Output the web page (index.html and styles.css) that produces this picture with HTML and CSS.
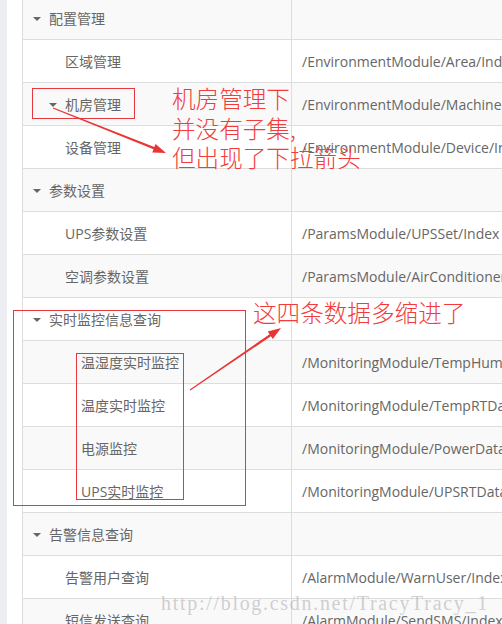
FILE: index.html
```html
<!DOCTYPE html>
<html lang="zh-CN">
<head>
<meta charset="utf-8">
<title>菜单管理</title>
<link rel="stylesheet" href="styles.css">
</head>
<body>
<div class="page">
  <div class="strip"></div>
  <div class="content">
    <div class="tree-table">
      <div class="row odd"><div class="name lvl1"><span class="twisty open"></span>配置管理</div><div class="url"></div></div>
      <div class="row"><div class="name lvl2"><span class="twisty"></span>区域管理</div><div class="url">/EnvironmentModule/Area/Index</div></div>
      <div class="row odd"><div class="name lvl2-open"><span class="twisty open"></span>机房管理</div><div class="url">/EnvironmentModule/MachineRoom/Index</div></div>
      <div class="row"><div class="name lvl2"><span class="twisty"></span>设备管理</div><div class="url">/EnvironmentModule/Device/Index</div></div>
      <div class="row odd"><div class="name lvl1"><span class="twisty open"></span>参数设置</div><div class="url"></div></div>
      <div class="row"><div class="name lvl2"><span class="twisty"></span>UPS参数设置</div><div class="url">/ParamsModule/UPSSet/Index</div></div>
      <div class="row odd"><div class="name lvl2"><span class="twisty"></span>空调参数设置</div><div class="url">/ParamsModule/AirConditionerSet/Index</div></div>
      <div class="row"><div class="name lvl1"><span class="twisty open"></span>实时监控信息查询</div><div class="url"></div></div>
      <div class="row odd"><div class="name lvl3"><span class="twisty"></span>温湿度实时监控</div><div class="url">/MonitoringModule/TempHumRTData/Index</div></div>
      <div class="row"><div class="name lvl3"><span class="twisty"></span>温度实时监控</div><div class="url">/MonitoringModule/TempRTData/Index</div></div>
      <div class="row odd"><div class="name lvl3"><span class="twisty"></span>电源监控</div><div class="url">/MonitoringModule/PowerData/Index</div></div>
      <div class="row"><div class="name lvl3"><span class="twisty"></span>UPS实时监控</div><div class="url">/MonitoringModule/UPSRTData/Index</div></div>
      <div class="row odd"><div class="name lvl1"><span class="twisty open"></span>告警信息查询</div><div class="url"></div></div>
      <div class="row"><div class="name lvl2"><span class="twisty"></span>告警用户查询</div><div class="url">/AlarmModule/WarnUser/Index</div></div>
      <div class="row odd"><div class="name lvl2"><span class="twisty"></span>短信发送查询</div><div class="url">/AlarmModule/SendSMS/Index</div></div>
    </div>
  </div>

  <svg class="marks" width="502" height="624" viewBox="0 0 502 624" aria-hidden="true">
    <rect x="32.5" y="88.5" width="102" height="30" fill="none" stroke="#e8383d" stroke-width="1"/>
    <rect x="13.5" y="310.5" width="232" height="195" fill="none" stroke="#e8383d" stroke-width="1"/>
    <rect x="76.5" y="353.5" width="107" height="146" fill="none" stroke="#e8383d" stroke-width="1"/>
    <polygon fill="#ea3535" points="52.8,108.5 153.5,149.3 152.3,152.4 166,153 155.6,144.0 154.3,147.1 53.2,107.5"/>
    <polygon fill="#ea3535" points="190.3,390.4 270.9,336.3 272.8,339.0 281,328 267.7,331.6 269.6,334.3 189.7,389.6"/>
  </svg>

  <div class="note note-machine">机房管理下<br>并没有子集,<br>但出现了下拉箭头</div>
  <div class="note note-indent">这四条数据多缩进了</div>
  <div class="watermark">http://blog.csdn.net/TracyTracy_1</div>
</div>
</body>
</html>
```

FILE: styles.css
```css
html, body {
  margin: 0;
  padding: 0;
  background: #ffffff;
}

body {
  width: 502px;
  height: 624px;
  overflow: hidden;
  font-family: "Open Sans", "Noto Sans CJK SC", sans-serif;
  font-size: 14px;
  color: #666666;
}

.page {
  position: relative;
  display: flex;
  width: 502px;
  height: 624px;
  overflow: hidden;
}

.strip {
  flex: none;
  width: 7px;
  background: #edeef2;
}

.content {
  flex: none;
  padding-left: 15px;
}

.tree-table {
  width: 680px;
  margin-top: -4px;
  border-top: 1px solid #dddddd;
  border-left: 1px solid #dddddd;
}

.row {
  display: flex;
  height: 42px;
  border-bottom: 1px solid #dddddd;
  background: #ffffff;
}

.row.odd {
  background: #f9f9f9;
}

.name {
  flex: none;
  width: 268px;
  box-sizing: content-box;
  border-right: 1px solid #dddddd;
  display: flex;
  align-items: center;
  white-space: nowrap;
}

.name.lvl1 { padding-left: 10px; width: 258px; }
.name.lvl2 { padding-left: 26px; width: 242px; }
.name.lvl2-open { padding-left: 26px; width: 242px; }
.name.lvl3 { padding-left: 42px; width: 226px; }

.twisty {
  flex: none;
  width: 16px;
  height: 14px;
  display: flex;
  align-items: center;
}

.twisty.open::before {
  content: "";
  display: block;
  width: 0;
  height: 0;
  margin-top: 1px;
  border-left: 4px solid transparent;
  border-right: 4px solid transparent;
  border-top: 4px solid #666666;
}

.url {
  flex: 1;
  display: flex;
  align-items: center;
  padding-left: 10px;
  white-space: nowrap;
}

.marks {
  position: absolute;
  left: 0;
  top: 0;
  pointer-events: none;
}

.note {
  position: absolute;
  font-family: "Noto Sans CJK SC", sans-serif;
  font-weight: 300;
  font-size: 23.6px;
  line-height: 29.5px;
  color: #f23c3c;
  white-space: nowrap;
}

.note-machine {
  left: 172px;
  top: 84px;
}

.note-indent {
  left: 253px;
  top: 298px;
}

.watermark {
  position: absolute;
  left: 161px;
  top: 593px;
  font-family: "Liberation Serif", serif;
  font-size: 20px;
  line-height: 20px;
  letter-spacing: 1.7px;
  color: rgba(170, 170, 170, 0.55);
  white-space: nowrap;
}
```
